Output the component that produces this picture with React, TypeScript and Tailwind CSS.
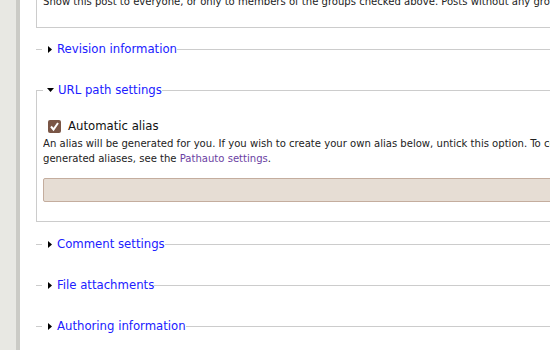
import React from "react";

const FONT = { fontFamily: '"DejaVu Sans Condensed", "DejaVu Sans", sans-serif' };

function Arrow({ open }: { open?: boolean }) {
  if (open) {
    return (
      <svg width="7" height="4" viewBox="0 0 7 4" className="mr-[4px] inline-block">
        <polygon points="0,0 7,0 3.5,4" fill="#000" />
      </svg>
    );
  }
  return (
    <svg width="4" height="7" viewBox="0 0 4 7" className="mr-[5px] ml-[1px] inline-block">
      <polygon points="0,0 4,3.5 0,7" fill="#000" />
    </svg>
  );
}

function Collapsed({ title, className }: { title: string; className?: string }) {
  return (
    <fieldset className={"w-[560px] border-t border-[#ccc] pl-[6px] " + (className ?? "")}>
      <legend className="pl-[5px] text-[13px] leading-[16px] text-[#2020ff]">
        <span className="flex items-center">
          <Arrow />
          <span>{title}</span>
        </span>
      </legend>
      <div className="h-[25px]" />
    </fieldset>
  );
}

function CheckBox() {
  return (
    <svg width="13" height="13" viewBox="0 0 13 13" className="block">
      <rect x="0" y="0" width="13" height="13" rx="2" fill="#7a5646" />
      <polyline points="3,6.5 5.5,9.5 10,3" fill="none" stroke="#fff" strokeWidth="2" />
    </svg>
  );
}

export default function App() {
  return (
    <div className="flex h-[350px] w-[550px] overflow-hidden bg-white text-[#222]" style={FONT}>
      <div className="w-[16px] shrink-0 bg-[#e8e8e3]" />
      <div className="w-[4px] shrink-0 bg-[#cbcbc6]" />
      <div className="flex-1 overflow-hidden pl-[16px]">
        <div className="-mt-[10px] h-[38px] w-[560px] overflow-hidden border border-t-0 border-[#ccc] pl-[6px] pt-[4px] text-[11.2px] leading-[15px] whitespace-nowrap">
          Show this post to everyone, or only to members of the groups checked above. Posts without any groups will be visible to everyone.
        </div>

        <Collapsed title="Revision information" className="mt-[13px]" />

        <fieldset className="mt-0 w-[560px] border border-[#ccc] pl-[6px] pb-[19px]">
          <legend className="pl-[4px] text-[13px] leading-[16px] text-[#2020ff]">
            <span className="flex items-center">
              <Arrow open />
              <span>URL path settings</span>
            </span>
          </legend>
          <div className="mt-[20px] flex h-[16px] items-center pl-[5px]">
            <CheckBox />
            <span className="ml-[7px] text-[13px] text-[#111]">Automatic alias</span>
          </div>
          <div className="mt-[2px] w-[510px] overflow-hidden text-[11.2px] leading-[15px] whitespace-nowrap text-[#222]">
            An alias will be generated for you. If you wish to create your own alias below, untick this option. To control the format of the
            <br />
            generated aliases, see the <span className="text-[#6b3fa3]">Pathauto settings</span>.
          </div>
          <div className="mt-[12px] h-[24px] w-[540px] rounded-[2px] border border-[#c4ad9e] bg-[#e6ddd4]" />
        </fieldset>

        <Collapsed title="Comment settings" className="mt-[14px]" />
        <Collapsed title="File attachments" />
        <Collapsed title="Authoring information" />
      </div>
    </div>
  );
}
